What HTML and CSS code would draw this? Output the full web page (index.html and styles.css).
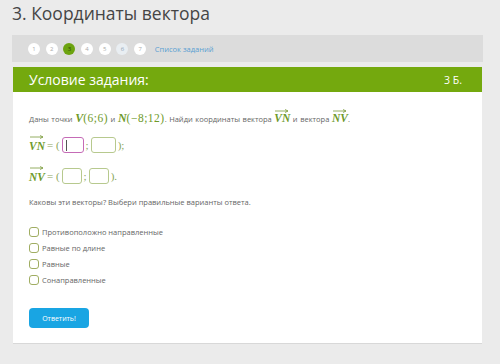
FILE: index.html
```html
<!DOCTYPE html>
<html lang="ru">
  <head>
    <meta charset="UTF-8" />
    <title>3. Координаты вектора</title>
    <link rel="stylesheet" href="styles.css">
  </head>
  <body>
    <h1 class="page-title">3. Координаты вектора</h1>

    <div class="task-nav">
      <span class="step">1</span>
      <span class="step">2</span>
      <span class="step current">3</span>
      <span class="step">4</span>
      <span class="step">5</span>
      <span class="step visited">6</span>
      <span class="step">7</span>
      <a class="task-list" href="#">Список заданий</a>
    </div>

    <div class="card">
      <div class="card-head">
        <span>Условие задания:</span>
        <span class="points">3 Б.</span>
      </div>

      <div class="card-body">
        <p class="statement">
          Даны точки <span class="math">V</span><span class="num">(6;6)</span> и
          <span class="math">N</span><span class="num">(−8;12)</span>. Найди координаты вектора
          <span class="vec"><svg width="14" height="4" viewBox="0 0 14 4"><path d="M0 2H13M10 0.5L13 2L10 3.5" stroke="#7a9a3a" stroke-width="0.8" fill="none"/></svg><b>VN</b></span> и вектора
          <span class="vec"><svg width="14" height="4" viewBox="0 0 14 4"><path d="M0 2H13M10 0.5L13 2L10 3.5" stroke="#7a9a3a" stroke-width="0.8" fill="none"/></svg><b>NV</b></span>.
        </p>

        <div class="answer-row">
          <span class="vec"><svg width="14" height="4" viewBox="0 0 14 4"><path d="M0 2H13M10 0.5L13 2L10 3.5" stroke="#7a9a3a" stroke-width="0.8" fill="none"/></svg><b>VN</b></span>
          <span class="sym">= (</span>
          <span class="box focused"><i class="caret"></i></span>
          <span class="sym">;</span>
          <span class="box wide"></span>
          <span class="sym">);</span>
        </div>

        <div class="answer-row">
          <span class="vec"><svg width="14" height="4" viewBox="0 0 14 4"><path d="M0 2H13M10 0.5L13 2L10 3.5" stroke="#7a9a3a" stroke-width="0.8" fill="none"/></svg><b>NV</b></span>
          <span class="sym">= (</span>
          <span class="box"></span>
          <span class="sym">;</span>
          <span class="box"></span>
          <span class="sym">).</span>
        </div>

        <p class="question">Каковы эти векторы? Выбери правильные варианты ответа.</p>

        <ul class="options">
          <li><span class="check"></span>Противоположно направленные</li>
          <li><span class="check"></span>Равные по длине</li>
          <li><span class="check"></span>Равные</li>
          <li><span class="check"></span>Сонаправленные</li>
        </ul>

        <button class="submit" type="button">Ответить!</button>
      </div>
    </div>
  </body>
</html>
```

FILE: styles.css
```css
body {
  margin: 0;
  background-color: #ebebeb;
  font-family: "Open Sans", "Noto Sans", sans-serif;
  color: #555;
}

.page-title {
  margin: 0;
  padding: 1px 0 0 12px;
  height: 34px;
  font-size: 17.5px;
  font-weight: normal;
  color: #454545;
  line-height: 24px;
}

.task-nav {
  margin-left: 12px;
  width: 455px;
  height: 27px;
  padding-left: 16px;
  background-color: #dcdcdc;
  display: flex;
  align-items: center;
  gap: 5.7px;
}

.step {
  width: 12px;
  height: 12px;
  border-radius: 50%;
  background-color: #fff;
  color: #aaa;
  font-size: 6px;
  display: flex;
  align-items: center;
  justify-content: center;
}

.step.current {
  background-color: #6ca30f;
  color: #2c4a05;
}

.step.visited {
  background-color: #e9eef2;
  color: #8aa0b5;
}

.task-list {
  margin-left: 3px;
  font-size: 7.5px;
  color: #5a9fd2;
  text-decoration: none;
}

.card {
  margin: 5px 0 0 13px;
  width: 469px;
  background-color: #fff;
  border-bottom: 1px solid #d8d8d8;
}

.card-head {
  height: 25px;
  padding: 0 20px 0 16px;
  background-color: #74a90e;
  color: #fff;
  display: flex;
  align-items: center;
  justify-content: space-between;
  font-size: 14px;
}

.card-head .points {
  font-size: 10.5px;
}

.card-body {
  padding: 17px 16px 15px 16px;
}

.statement {
  margin: 0;
  font-size: 7.5px;
  line-height: 14px;
  color: #666;
  word-spacing: 0.6px;
}

.math {
  font-family: "Liberation Serif", "DejaVu Serif", serif;
  font-style: italic;
  font-weight: bold;
  font-size: 12px;
  color: #6e9a2a;
}

.num {
  font-family: "Liberation Serif", "DejaVu Serif", serif;
  font-size: 11.5px;
  letter-spacing: 0.5px;
  color: #6e9a2a;
}

.vec {
  display: inline-block;
  text-align: center;
  line-height: 10px;
}

.vec svg {
  display: block;
  margin: 0 auto;
}

.vec b {
  font-family: "Liberation Serif", "DejaVu Serif", serif;
  font-style: italic;
  font-size: 11.5px;
  color: #6e9a2a;
}

.answer-row {
  display: flex;
  align-items: center;
  gap: 1px;
  height: 20px;
  margin-top: 9px;
}

.answer-row .vec {
  margin-top: -4px;
}

.answer-row + .answer-row {
  margin-top: 11px;
}

.sym {
  font-family: "Liberation Serif", "DejaVu Serif", serif;
  font-size: 11px;
  color: #8aa65a;
  padding: 0 1px;
}

.box {
  width: 20px;
  height: 16px;
  border: 1px solid #b7c98e;
  border-radius: 3px;
  display: flex;
  align-items: center;
  padding-left: 3px;
  box-sizing: border-box;
}

.box.wide {
  width: 25px;
}

.box.focused {
  width: 22px;
  border-color: #c56bb6;
}

.caret {
  width: 1px;
  height: 11px;
  background-color: #555;
}

.question {
  margin: 11px 0 0 0;
  font-size: 7.5px;
  color: #666;
}

.options {
  list-style: none;
  margin: 17px 0 0 0;
  padding: 0;
}

.options li {
  display: flex;
  align-items: center;
  height: 16px;
  font-size: 7.5px;
  color: #666;
}

.check {
  width: 10px;
  height: 10px;
  margin-right: 3px;
  border: 1.5px solid #a0ad62;
  border-radius: 3px;
  box-sizing: border-box;
}

.submit {
  margin-top: 20px;
  width: 60px;
  height: 20px;
  border: none;
  border-radius: 4px;
  background-color: #19a5e3;
  color: #fff;
  font-family: "Open Sans", sans-serif;
  font-size: 7px;
  padding: 0;
}
```
